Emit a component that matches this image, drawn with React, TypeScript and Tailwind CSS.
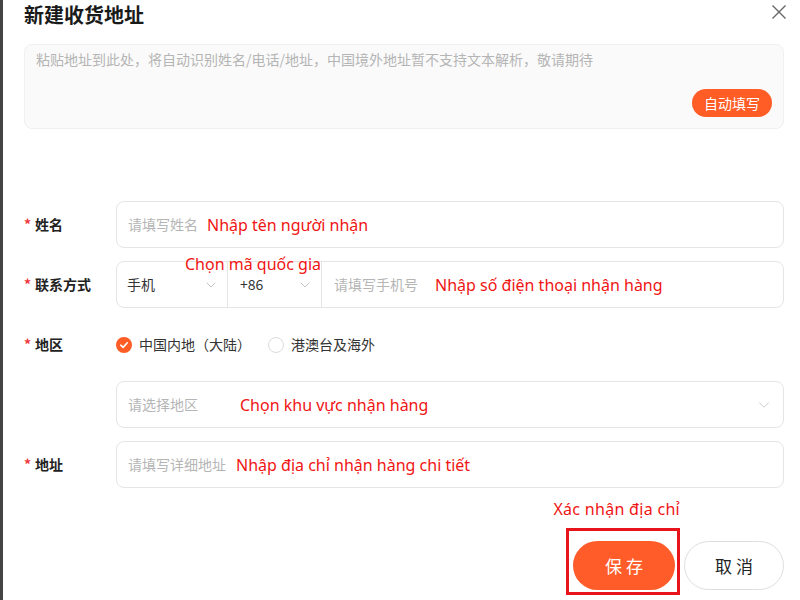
import React from "react";
import { ChevronDown } from "lucide-react";

const cjk = { fontFamily: '"Noto Sans CJK SC", "Noto Sans", sans-serif' };
const latin = { fontFamily: '"Noto Sans", "Open Sans", sans-serif' };

function Label({ text }: { text: string }) {
  return (
    <div className="w-[92px] shrink-0 flex items-center text-[14px] font-bold text-[#222]">
      <span className="text-[#f0363d] mr-[4px] text-[14px]">*</span>
      {text}
    </div>
  );
}

function Note({ children, className }: { children: React.ReactNode; className: string }) {
  return (
    <span className={"absolute text-[16px] text-[#f01414] whitespace-nowrap leading-none " + className} style={latin}>
      {children}
    </span>
  );
}

export default function App() {
  return (
    <div className="w-[800px] h-[600px] flex bg-white overflow-hidden" style={cjk}>
      <div className="w-[3px] shrink-0 bg-[#444]" />
      <div className="relative flex-1 flex flex-col pl-[21px] pr-[16px] rounded-bl-[6px]">
        <div className="h-[30px] leading-[30px] text-[20px] font-bold text-[#1a1a1a]">新建收货地址</div>
        <svg className="absolute right-[13px] top-[4px]" width="16" height="16" viewBox="0 0 16 16">
          <path d="M1.5 1.5 L14.5 14.5 M14.5 1.5 L1.5 14.5" stroke="#666" strokeWidth="1.4" fill="none" />
        </svg>

        <div className="relative mt-[14px] h-[85px] rounded-[8px] border border-[#f0f0f0] bg-[#fafafa] px-[11px] pt-[3px]">
          <div className="text-[14px] text-[#b5b5b5] leading-[22px]">
            粘贴地址到此处，将自动识别姓名/电话/地址，中国境外地址暂不支持文本解析，敬请期待
          </div>
          <div className="absolute right-[11px] bottom-[11px] h-[28px] px-[12px] rounded-full bg-[#ff5c26] text-white text-[14px] flex items-center">
            自动填写
          </div>
        </div>

        <div className="mt-[72px] flex flex-col gap-[13px]">
          <div className="flex h-[47px]">
            <Label text="姓名" />
            <div className="relative flex-1 rounded-[8px] border border-[#e5e5e5] flex items-center px-[11px] text-[14px] text-[#b5b5b5]">
              请填写姓名
              <span className="ml-[9px] text-[16px] text-[#f01414]" style={latin}>Nhập tên người nhận</span>
            </div>
          </div>

          <div className="relative flex h-[47px]">
            <Label text="联系方式" />
            <div className="flex-1 rounded-[8px] border border-[#e5e5e5] flex text-[14px]">
              <div className="w-[111px] border-r border-[#e5e5e5] flex items-center justify-between pl-[10px] pr-[8px] text-[#333]">
                手机
                <ChevronDown size={16} strokeWidth={1.2} color="#b5b5b5" />
              </div>
              <div className="w-[94px] border-r border-[#e5e5e5] flex items-center justify-between pl-[12px] pr-[8px] text-[#333]">
                +86
                <ChevronDown size={16} strokeWidth={1.2} color="#b5b5b5" />
              </div>
              <div className="flex-1 flex items-center pl-[12px] text-[#b5b5b5]">
                请填写手机号
                <span className="ml-[17px] text-[16px] text-[#f01414]" style={latin}>Nhập số điện thoại nhận hàng</span>
              </div>
            </div>
            <Note className="left-[161px] top-[-5px]">Chọn mã quốc gia</Note>
          </div>

          <div className="flex h-[47px] items-center">
            <Label text="地区" />
            <div className="flex items-center text-[14px] text-[#333]">
              <span className="w-[16px] h-[16px] rounded-full bg-[#ff5c26] flex items-center justify-center">
                <svg width="10" height="10" viewBox="0 0 10 10">
                  <path d="M1.8 5.2 L4.1 7.4 L8.3 2.8" stroke="#fff" strokeWidth="1.6" fill="none" strokeLinecap="round" strokeLinejoin="round" />
                </svg>
              </span>
              <span className="ml-[7px]">中国内地（大陆）</span>
              <span className="ml-[17px] w-[16px] h-[16px] rounded-full border border-[#dcdcdc] bg-white" />
              <span className="ml-[7px]">港澳台及海外</span>
            </div>
          </div>

          <div className="flex h-[47px]">
            <div className="w-[92px] shrink-0" />
            <div className="flex-1 rounded-[8px] border border-[#e5e5e5] flex items-center justify-between pl-[11px] pr-[10px] text-[14px] text-[#b5b5b5]">
              <span className="flex items-center">
                请选择地区
                <span className="ml-[42px] text-[16px] text-[#f01414]" style={latin}>Chọn khu vực nhận hàng</span>
              </span>
              <ChevronDown size={18} strokeWidth={1.1} color="#c5c5c5" />
            </div>
          </div>

          <div className="flex h-[47px]">
            <Label text="地址" />
            <div className="flex-1 rounded-[8px] border border-[#e5e5e5] flex items-center px-[11px] text-[14px] text-[#b5b5b5]">
              请填写详细地址
              <span className="ml-[10px] text-[16px] text-[#f01414]" style={latin}>Nhập địa chỉ nhận hàng chi tiết</span>
            </div>
          </div>
        </div>

        <div className="mt-[11px] flex justify-end pr-[104px] h-[20px] items-center">
          <span className="text-[16px] text-[#f01414] tracking-[0.3px]" style={latin}>Xác nhận địa chỉ</span>
        </div>

        <div className="relative mt-[22px] flex justify-end gap-[9px]">
          <div className="w-[102px] h-[49px] rounded-full bg-[#ff5c2a] text-white text-[17px] tracking-[4px] flex items-center justify-center pl-[4px]">
            保存
          </div>
          <div className="w-[100px] h-[49px] rounded-full border border-[#dedede] bg-white text-[#222] text-[17px] tracking-[4px] flex items-center justify-center pl-[4px]">
            取消
          </div>
          <div className="absolute right-[104px] top-[-13px] w-[114px] h-[67px] border-[3px] border-[#e8141b]" />
        </div>
      </div>
    </div>
  );
}
